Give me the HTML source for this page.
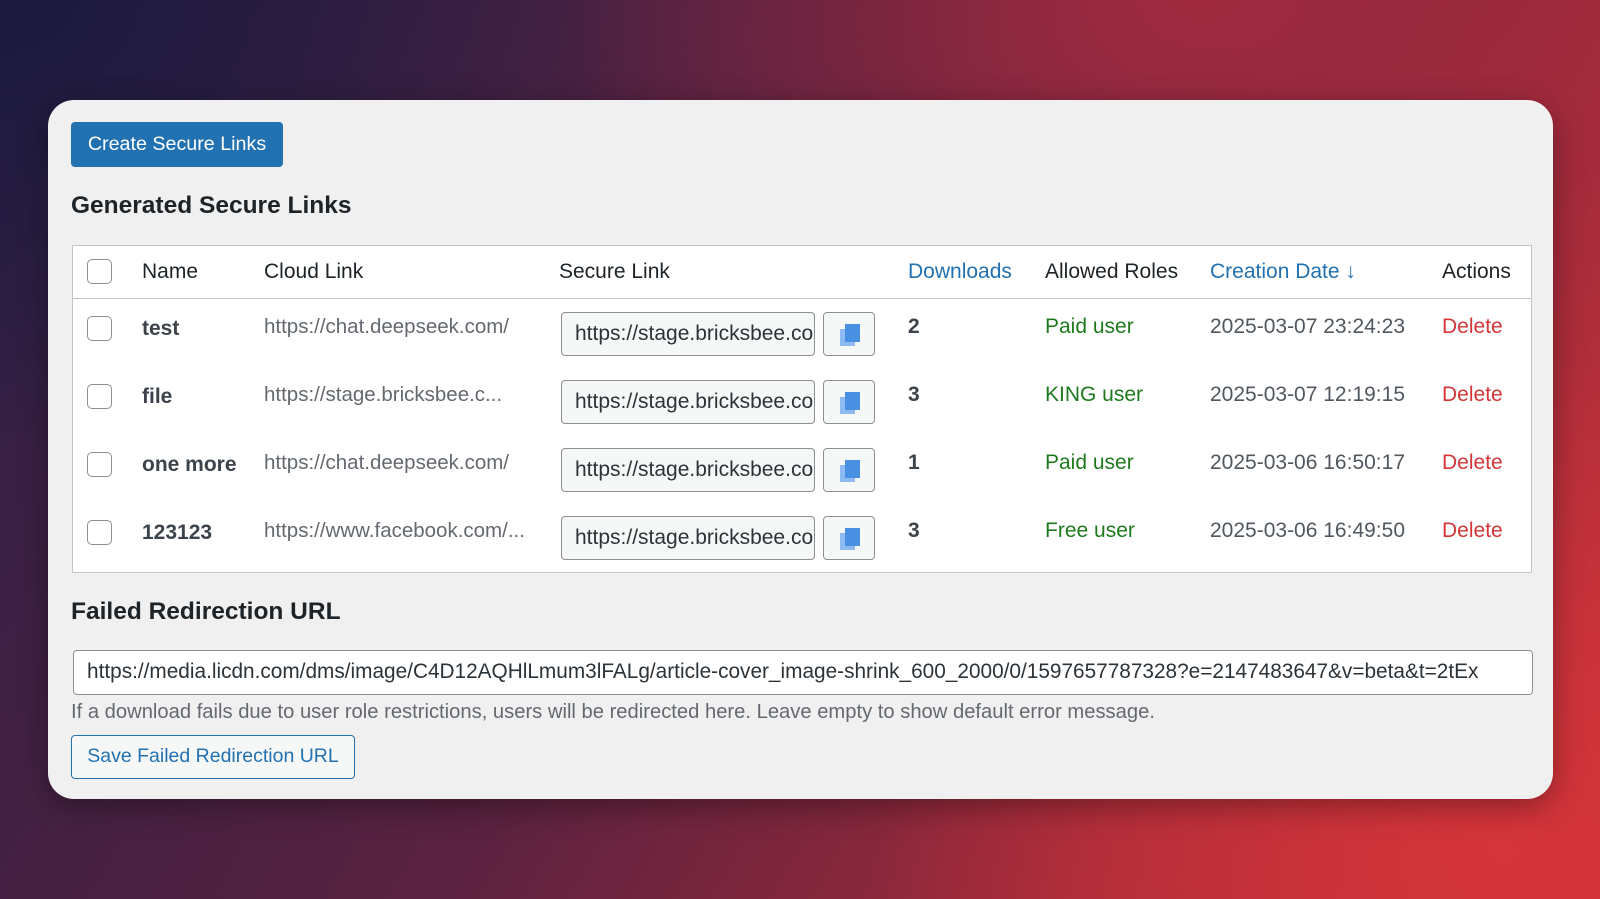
<!DOCTYPE html>
<html><head><meta charset="utf-8"><style>
*{box-sizing:border-box;margin:0;padding:0}
body{width:1600px;height:899px;overflow:hidden;font-family:"Liberation Sans",sans-serif;position:relative;
background:
radial-gradient(ellipse 900px 700px at 1500px 850px,#d4343a 0%,rgba(212,52,58,0) 70%),
radial-gradient(ellipse 800px 500px at 1200px 0px,#a02a40 0%,rgba(160,42,64,0) 80%),
radial-gradient(ellipse 700px 500px at 0px 0px,#1c1a3e 0%,rgba(28,26,62,0) 90%),
linear-gradient(120deg,#2a1f45 0%,#5a2240 45%,#a02a3a 75%,#c9333a 100%);}
.a{position:absolute}
.card{left:48px;top:100px;width:1505px;height:699px;background:#f0f0f1;border-radius:26px;box-shadow:0 8px 30px rgba(0,0,0,.35)}
.btn{left:71px;top:122px;width:212px;height:45px;background:#2271b1;border-radius:4px;color:#fff;font-size:19.7px;line-height:45px;text-align:center}
h2{position:absolute;font-size:24.5px;font-weight:bold;color:#1d2327}
.tbl{left:72px;top:245px;width:1460px;height:328px;background:#fff;border:1px solid #c3c4c7}
.hdr{left:72px;top:298px;width:1460px;height:1px;background:#c3c4c7}
.t{position:absolute;font-size:21px;color:#1d2327;white-space:nowrap}
.cb{position:absolute;width:25px;height:25px;border:1.5px solid #8c8f94;border-radius:5px;background:#fff}
.inp{position:absolute;width:254px;height:44px;border:1.5px solid #8c8f94;border-radius:4px;background:#f6f7f7;font-size:21px;line-height:41px;padding-left:13px;overflow:hidden;white-space:nowrap;color:#2c3338}
.cp{position:absolute;width:52px;height:44px;border:1.5px solid #8c8f94;border-radius:4px;background:#f6f7f7}
.cp svg{position:absolute;left:13px;top:9px}
.blue{color:#2271b1}.green{color:#1f7a1f}.red{color:#d63638}.grey{color:#646970}
.cl{font-size:20.5px}
</style></head><body>
<div class="a card"></div>
<div class="a btn">Create Secure Links</div>
<h2 style="left:71px;top:192px">Generated Secure Links</h2>
<div class="a tbl"></div>
<div class="a hdr"></div>
<div class="cb" style="left:87px;top:259px"></div>
<div class="t" style="left:142px;top:260px">Name</div>
<div class="t" style="left:264px;top:260px">Cloud Link</div>
<div class="t" style="left:559px;top:260px">Secure Link</div>
<div class="t blue" style="left:908px;top:260px">Downloads</div>
<div class="t" style="left:1045px;top:260px">Allowed Roles</div>
<div class="t blue" style="left:1210px;top:260px">Creation Date ↓</div>
<div class="t" style="left:1442px;top:260px">Actions</div>

<div class="cb" style="left:87px;top:316px"></div>
<div class="t" style="left:142px;top:317px;font-weight:bold;color:#3c434a">test</div>
<div class="t grey cl" style="left:264px;top:315px">https://chat.deepseek.com/</div>
<div class="inp" style="left:561px;top:312px">https://stage.bricksbee.com/</div>
<div class="cp" style="left:823px;top:312px"><svg width="26" height="26" viewBox="0 0 26 26"><rect x="3" y="7" width="15" height="17" fill="#8dbaf0"/><rect x="8" y="2" width="15" height="18" fill="#4a90e2"/></svg></div>
<div class="t" style="left:908px;top:315px;font-weight:bold;color:#3c434a">2</div>
<div class="t green" style="left:1045px;top:315px">Paid user</div>
<div class="t" style="left:1210px;top:315px;color:#50575e">2025-03-07 23:24:23</div>
<div class="t red" style="left:1442px;top:315px">Delete</div>

<div class="cb" style="left:87px;top:384px"></div>
<div class="t" style="left:142px;top:385px;font-weight:bold;color:#3c434a">file</div>
<div class="t grey cl" style="left:264px;top:383px">https://stage.bricksbee.c...</div>
<div class="inp" style="left:561px;top:380px">https://stage.bricksbee.com/</div>
<div class="cp" style="left:823px;top:380px"><svg width="26" height="26" viewBox="0 0 26 26"><rect x="3" y="7" width="15" height="17" fill="#8dbaf0"/><rect x="8" y="2" width="15" height="18" fill="#4a90e2"/></svg></div>
<div class="t" style="left:908px;top:383px;font-weight:bold;color:#3c434a">3</div>
<div class="t green" style="left:1045px;top:383px">KING user</div>
<div class="t" style="left:1210px;top:383px;color:#50575e">2025-03-07 12:19:15</div>
<div class="t red" style="left:1442px;top:383px">Delete</div>

<div class="cb" style="left:87px;top:452px"></div>
<div class="t" style="left:142px;top:453px;font-weight:bold;color:#3c434a">one more</div>
<div class="t grey cl" style="left:264px;top:451px">https://chat.deepseek.com/</div>
<div class="inp" style="left:561px;top:448px">https://stage.bricksbee.com/</div>
<div class="cp" style="left:823px;top:448px"><svg width="26" height="26" viewBox="0 0 26 26"><rect x="3" y="7" width="15" height="17" fill="#8dbaf0"/><rect x="8" y="2" width="15" height="18" fill="#4a90e2"/></svg></div>
<div class="t" style="left:908px;top:451px;font-weight:bold;color:#3c434a">1</div>
<div class="t green" style="left:1045px;top:451px">Paid user</div>
<div class="t" style="left:1210px;top:451px;color:#50575e">2025-03-06 16:50:17</div>
<div class="t red" style="left:1442px;top:451px">Delete</div>

<div class="cb" style="left:87px;top:520px"></div>
<div class="t" style="left:142px;top:521px;font-weight:bold;color:#3c434a">123123</div>
<div class="t grey cl" style="left:264px;top:519px">https://www.facebook.com/...</div>
<div class="inp" style="left:561px;top:516px">https://stage.bricksbee.com/</div>
<div class="cp" style="left:823px;top:516px"><svg width="26" height="26" viewBox="0 0 26 26"><rect x="3" y="7" width="15" height="17" fill="#8dbaf0"/><rect x="8" y="2" width="15" height="18" fill="#4a90e2"/></svg></div>
<div class="t" style="left:908px;top:519px;font-weight:bold;color:#3c434a">3</div>
<div class="t green" style="left:1045px;top:519px">Free user</div>
<div class="t" style="left:1210px;top:519px;color:#50575e">2025-03-06 16:49:50</div>
<div class="t red" style="left:1442px;top:519px">Delete</div>

<h2 style="left:71px;top:598px">Failed Redirection URL</h2>
<div class="inp" style="left:73px;top:650px;width:1460px;height:45px;background:#fff;line-height:42px;font-size:20.8px">https://media.licdn.com/dms/image/C4D12AQHlLmum3lFALg/article-cover_image-shrink_600_2000/0/1597657787328?e=2147483647&amp;v=beta&amp;t=2tEx</div>
<div class="t" style="left:71px;top:701px;font-size:20.2px;color:#646970">If a download fails due to user role restrictions, users will be redirected here. Leave empty to show default error message.</div>
<div class="a" style="left:71px;top:735px;width:284px;height:44px;border:1.5px solid #2271b1;border-radius:4px;background:#f6f7f7;color:#2271b1;font-size:19.5px;line-height:41px;text-align:center">Save Failed Redirection URL</div>
</body></html>
